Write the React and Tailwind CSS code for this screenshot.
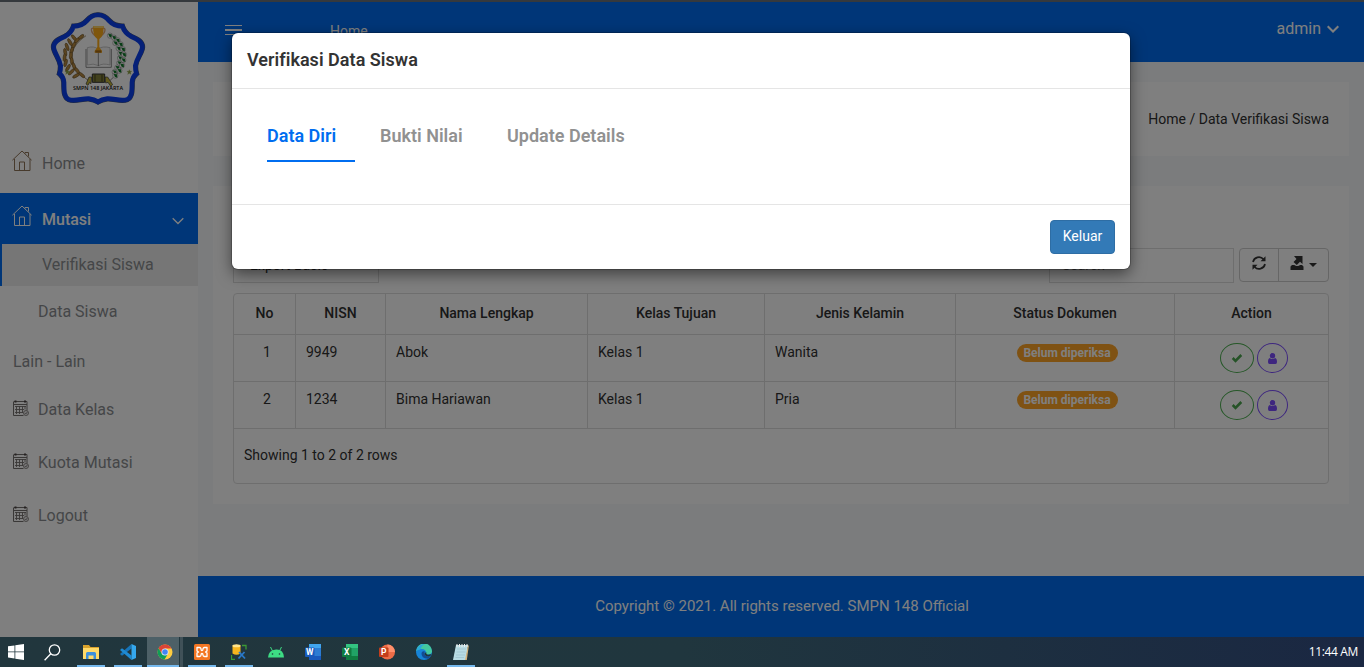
import React from "react";

const LEAVES = [
  [100, 96, 50], [88, 108, 60], [80, 122, 70], [75, 138, 80], [74, 154, 95], [78, 170, 105], [86, 185, 120], [97, 198, 135], [112, 210, 150],
];

const VINE = [
  [210, 92], [222, 98], [233, 106], [226, 114], [242, 118], [236, 130], [249, 133], [241, 145], [252, 149], [240, 159], [250, 165], [238, 174], [246, 181], [232, 188], [238, 197], [224, 201], [226, 212],
];

const SHIELD =
  "M174 30 C188 29 196 34 207 47 Q222 64 247 64 Q254 84 272 94 C296 104 307 112 307 126 C306 144 290 158 286 182 Q286 196 289 206 Q277 216 276 232 C276 258 276 276 262 283 C244 290 222 280 202 281 Q185 283 174 290 Q163 283 146 281 C126 280 104 290 86 283 C72 276 72 258 72 232 Q71 216 59 206 Q62 196 62 182 C58 158 42 144 41 126 C41 112 52 104 76 94 Q94 84 101 64 Q126 64 141 47 C152 34 160 29 174 30Z";

function SchoolLogo() {
  return (
    <svg viewBox="0 0 336 315" className="h-[105px] w-[112px]">
      <path d={SHIELD} fill="#fff" stroke="#4a5878" strokeWidth="17" />
      <path d={SHIELD} fill="#fff" stroke="#0a40f0" strokeWidth="14" />
      <path d="M138 92 Q66 140 118 206 L150 230" fill="none" stroke="#7a5c2c" strokeWidth="2" />
      {LEAVES.map(([x, y, r]) => (
        <g key={y} fill="#b98a40" stroke="#5c4824" strokeWidth="1.5">
          <ellipse cx={x + 4} cy={y} rx="12" ry="4.5" transform={`rotate(${r} ${x} ${y})`} />
          <ellipse cx={x + 24} cy={y + 4} rx="11" ry="4.5" transform={`rotate(${-r + 10} ${x + 18} ${y + 4})`} />
        </g>
      ))}
      <path d="M208 92 Q278 140 232 206 L204 232" fill="none" stroke="#555" strokeWidth="2" />
      {VINE.map(([x, y]) => (
        <g key={`${x}-${y}`}>
          <circle cx={x} cy={y} r="8" fill="#fff" stroke="#777" strokeWidth="1.4" />
          <path d={`M${x - 5} ${y - 5}l10 1 1 10-7-2z`} fill="#137a2c" />
        </g>
      ))}
      <path d="M142 128 Q162 122 174 132 Q188 122 210 128 V180 Q188 174 176 182 Q160 174 142 180Z" fill="#f4f4f4" stroke="#aaa" strokeWidth="2" />
      <path d="M138 132 V187 H214 V132 M175 132 V183" fill="none" stroke="#777" strokeWidth="2.5" />
      <path d="M162 70 C150 66 152 84 168 94 M186 70 C200 66 197 84 181 94" fill="none" stroke="#e0a878" strokeWidth="4" />
      <path d="M159 63 H191 Q191 96 178 102 V126 L186 138 V143 H164 V138 L172 126 V102 Q159 96 159 63Z" fill="#ffad18" />
      <path d="M159 63H191L189 69H161Z" fill="#ffd569" />
      <path d="M166 136h18v7h-18z" fill="#a86c18" />
      <path d="M147 216l8 0-2 20-5-3-4 8-6-4z M203 216l-8 0 2 18 7-2 8 12 6-5z" fill="#c6b73b" stroke="#333" strokeWidth="2" />
      <path d="M157 207h37v25h-37z" fill="#85823a" stroke="#333" strokeWidth="3" />
      <path d="M165 209v21M186 209v21" stroke="#45441c" strokeWidth="3" />
      <path d="M82 194l2 5h5l-4 4 2 5-5-3-5 3 2-5-4-4h5zM268 194l2 5h5l-4 4 2 5-5-3-5 3 2-5-4-4h5z" fill="#8fa344" stroke="#8fa344" />
      <text x="174" y="254" textAnchor="middle" textLength="150" lengthAdjust="spacingAndGlyphs" className="font-['Open_Sans']" fontSize="17" fontWeight="600" fill="#111">SMPN 148 JAKARTA</text>
    </svg>
  );
}

function HouseIcon({ className }) {
  return (
    <svg viewBox="0 0 20 21" className={`h-[21px] w-5 ${className}`} fill="none" stroke="currentColor" strokeWidth="1">
      <path d="M.4 10.2L10 1l9.6 9.2M2.500 9v11.500h15.500V9M7.500 20.500v-8.500h5v8.500M13 3.500V2.500h3.500V6.500" />
    </svg>
  );
}

function CalendarIcon() {
  return (
    <svg viewBox="0 0 16 16" className="h-4 w-4 text-[#75706e]" fill="none" stroke="currentColor">
      <path d="M.5 2v13.500h10M.5 1.500h13.500v9M1 4.500h13" />
      <path d="M2.500 .5v2M12 .5v2" stroke="#4c4444" strokeWidth="2" />
      <path d="M2 6.500h11M2 9.500h9M2 12.500h8M3.500 6v8M6.500 6v8M9.500 6v7M12 6v3.500" strokeWidth=".9" />
      <circle cx="13" cy="13" r="2.500" fill="#eee" strokeWidth=".8" />
      <path d="M11.800 13l1 1 1.500-2" strokeWidth=".8" />
    </svg>
  );
}

function Chevron({ className }) {
  return (
    <svg viewBox="0 0 12 8" className={className} fill="none" stroke="currentColor">
      <path d="M.7 1.200L6 6.500l5.300-5.300" />
    </svg>
  );
}

function Sidebar() {
  return (
    <aside className="w-[198px] shrink-0 bg-white text-base text-[#8a8d90]">
      <div className="h-[131px] pl-10 pt-[3px]"><SchoolLogo /></div>
      <a className="flex h-[60px] items-center gap-[9px] pl-[13px] pt-0.5">
        <HouseIcon className="-ml-px -mt-2 mr-px text-[#8f7458]" />Home
      </a>
      <a className="flex h-[51px] items-center bg-[#006df0] pl-[13px] pr-3.5 pt-0.5 font-medium text-white">
        <HouseIcon className="-ml-px -mt-2 mr-2.5" />Mutasi
        <Chevron className="ml-auto mt-0.5 h-2 w-3 stroke-[1.3]" />
      </a>
      <a className="flex h-[42px] items-center border-l-2 border-[#006df0] bg-[#ededed] pl-10">Verifikasi Siswa</a>
      <a className="flex h-[50px] items-center pl-[38px] pt-0.5">Data Siswa</a>
      <div className="flex h-[47px] items-center pl-[13px] pt-[5px]">Lain - Lain</div>
      {["Data Kelas", "Kuota Mutasi", "Logout"].map((t) => (
        <a key={t} className="flex h-[53px] items-center gap-[9px] pl-[13px]">
          <span className="-mt-[3px]"><CalendarIcon /></span>{t}
        </a>
      ))}
    </aside>
  );
}

const ROWS = [
  ["1", "9949", "Abok", "Kelas 1", "Wanita"],
  ["2", "1234", "Bima Hariawan", "Kelas 1", "Pria"],
];

const COLS = "grid grid-cols-[62px_90px_202px_177px_191px_219px_153px]";

function Table() {
  return (
    <div className="h-[191px] rounded border border-[#ddd] text-[#303030]">
      <div className={`${COLS} h-[41px] border-b border-[#ddd] text-center font-medium`}>
        {["No", "NISN", "Nama Lengkap", "Kelas Tujuan", "Jenis Kelamin", "Status Dokumen", "Action"].map((h, i) => (
          <div key={h} className={`flex items-center justify-center pb-0.5 ${i < 6 ? "border-r border-[#ddd]" : ""}`}>{h}</div>
        ))}
      </div>
      {ROWS.map((r) => (
        <div key={r[0]} className={`${COLS} h-[47px] border-b border-[#ddd] leading-5`}>
          <div className="border-r border-[#ddd] pl-[5px] pt-[7px] text-center">{r[0]}</div>
          {r.slice(1).map((c, i) => (
            <div key={i} className="border-r border-[#ddd] pl-2.5 pt-[7px]">{c}</div>
          ))}
          <div className="flex items-start justify-center border-r border-[#ddd] pl-1 pt-[9px]">
            <span className="flex h-[18px] w-[101px] items-center justify-center rounded-full bg-[#ffa426] text-xs font-bold text-white">Belum diperiksa</span>
          </div>
          <div className="flex items-start gap-[3px] pl-[45px] pt-2">
            <span className="flex h-[30px] w-[34px] items-center justify-center rounded-[50%] border border-[#4caf50] text-[#4aa64e]">
              <svg viewBox="0 0 12 10" className="h-2.5 w-3"><path d="M1.700 5l2.800 2.800L10.300 2" fill="none" stroke="currentColor" strokeWidth="2.600" /></svg>
            </span>
            <span className="flex h-[30px] w-[31px] items-center justify-center rounded-[50%] border border-[#7c4dff] text-[#7c4dff]">
              <svg viewBox="0 0 9 11" className="h-[11px] w-[9px]" fill="currentColor"><circle cx="4.500" cy="2.800" r="2.700" /><path d="M1.800 5Q4.500 7.200 7.200 5Q9 5.500 9 9Q9 11 7.500 11H1.500Q0 11 0 9Q0 5.500 1.800 5Z" /></svg>
            </span>
          </div>
        </div>
      ))}
      <div className="pl-2.5 pt-4 leading-5">Showing 1 to 2 of 2 rows</div>
    </div>
  );
}

function Page() {
  return (
    <div className="flex min-w-0 flex-1 flex-col bg-[#f6f8fa] text-sm text-[#303030]">
      <header className="flex h-[60px] shrink-0 items-start bg-[#006df0] text-white">
        <svg viewBox="0 0 17 12" className="ml-[27px] mt-[22px] h-3 w-[17px]" stroke="currentColor">
          <path d="M0 1.500h17M0 10.500h17" /><path d="M0 6h17" strokeWidth="2" />
        </svg>
        <span className="ml-[88px] mt-[19px] leading-5">Home</span>
        <span className="ml-auto mt-[15px] text-base">admin</span>
        <Chevron className="ml-1.5 mr-[25px] mt-[23px] h-2 w-3 stroke-2" />
      </header>
      <div className="mx-[15px] mt-5 flex h-[74px] shrink-0 items-center justify-end bg-white pr-5">Home / Data Verifikasi Siswa</div>
      <section className="mx-[15px] mt-[30px] h-[318px] shrink-0 bg-white px-5 pt-[62px]">
        <div className="mb-2.5 flex h-[35px] items-start">
          <div className="flex h-[35px] w-[146px] items-center border border-[#ddd] pb-px pl-4">Export Basic</div>
          <div className="ml-auto flex h-[35px] w-[185px] items-center border border-[#ddd] pb-0.5 pl-3 text-[#777]">Search</div>
          <div className="ml-[5px] flex h-[34px] w-[90px] rounded border border-[#ccc] text-[#333]">
            <span className="flex w-[39px] items-center justify-center border-r border-[#ccc] pb-1">
              <svg viewBox="0 0 14 14" className="h-3.5 w-3.5" fill="none" stroke="currentColor" strokeWidth="1.700">
                <path d="M1 6A6 6 0 0 1 11.500 3.300M13 8A6 6 0 0 1 2.500 10.700" />
                <path d="M13.500 .3v5H8.500zM.5 13.700v-5h5z" fill="currentColor" stroke="none" />
              </svg>
            </span>
            <span className="flex flex-1 items-center justify-center gap-[5px] pb-1 pr-px">
              <svg viewBox="0 0 14 14" className="h-3.5 w-3.5" fill="currentColor">
                <path d="M4 0h8.500v8L10 5.800 6.800 9 3.500 6 6.500 3z M2 9h2.200l2 1h2l2-1H12l1.500 1.500V14H.5v-3.500z" />
              </svg>
              <svg viewBox="0 0 8 4" className="mt-1 h-1 w-2" fill="currentColor"><path d="M0 0h8L4 4z" /></svg>
            </span>
          </div>
        </div>
        <Table />
      </section>
      <footer className="mt-auto flex h-[61px] shrink-0 items-center justify-center bg-[#006df0] pl-0.5 text-[15px] text-white">
        Copyright © 2021. All rights reserved. SMPN 148 Official
      </footer>
    </div>
  );
}

function Modal() {
  return (
    <div className="absolute left-[232px] top-[31px] flex h-[236px] w-[898px] flex-col rounded-md bg-white text-[#333] shadow-[0_5px_15px_rgba(0,0,0,0.5),0_0_0_1px_rgba(0,0,0,0.2)]">
      <div className="flex h-14 items-center border-b border-[#e5e5e5] pb-0.5 pl-[15px] text-lg font-semibold tracking-[0.03px]">Verifikasi Data Siswa</div>
      <div className="flex flex-1 items-start pl-[35px] pt-8 text-lg font-semibold leading-[30px] text-[#919191]">
        <div className="h-[41px] w-[88px] border-b-2 border-[#006df0] text-[#006df0]">Data Diri</div>
        <div className="ml-[25px] w-[127px]">Bukti Nilai</div>
        <div>Update Details</div>
      </div>
      <div className="flex h-[65px] justify-end border-t border-[#e5e5e5] p-[15px]">
        <button className="h-[34px] w-[65px] rounded border border-[#2e6da4] bg-[#337ab7] pb-0.5 text-sm text-white">Keluar</button>
      </div>
    </div>
  );
}

const OfficeIcon = ({ letter, dark, mid, light, round }) => (
  <svg viewBox="0 0 16 16" className="h-4 w-4">
    {round ? (
      <><circle cx="8.500" cy="8" r="7.500" fill={mid} /><path d="M8.500 .5A7.500 7.500 0 0 1 16 8H8.500z" fill={light} /></>
    ) : (
      <><rect x="4" y="0" width="12" height="16" rx="1" fill={mid} /><path d="M4 0h12v4H4z" fill={light} /><path d="M4 12h12v4H4z" fill={dark} /></>
    )}
    <rect x="0" y="3.500" width="9.500" height="9.500" rx="1" fill={dark} />
    <text x="4.750" y="11.200" textAnchor="middle" fontSize="8.500" fontWeight="700" fill="#fff">{letter}</text>
  </svg>
);

const APPS = [
  { id: "files", open: true, icon: (
    <svg viewBox="0 0 16 16" className="h-4 w-4"><path d="M0 1h6l1.500 2H16v12H0z" fill="#d9a22c" /><path d="M0 4h16v11H0z" fill="#ffd968" /><path d="M3 15V9.500Q3 8 4.500 8h7Q13 8 13 9.500V15h-2.500v-3.500h-5V15z" fill="#3d8fdb" /></svg>
  ) },
  { id: "code", open: true, icon: (
    <svg viewBox="0 0 16 16" className="h-4 w-4"><path d="M11.500 4.500L2 11.700 0 10 11.500 0z" fill="#1674b8" /><path d="M11.500 11.500L2 4.300 0 6l11.500 10z" fill="#1f8ad2" /><path d="M11.500 0L16 2v12l-4.500 2z" fill="#35a8ee" /></svg>
  ) },
  { id: "chrome", active: true, icon: (
    <svg viewBox="0 0 16 16" className="h-4 w-4"><circle cx="8" cy="8" r="7.500" fill="#ffcd40" /><path d="M1.500 4.200A7.500 7.500 0 0 1 14.500 4.500H8L4.900 9.800z" fill="#db4437" /><path d="M1.500 4.200A7.500 7.500 0 0 0 7.500 15.500L11 9.800 4.900 9.800z" fill="#0f9d58" /><circle cx="8" cy="8" r="3.500" fill="#f1f1f1" /><circle cx="8" cy="8" r="2.800" fill="#4285f4" /></svg>
  ) },
  { id: "xampp", open: true, icon: (
    <svg viewBox="0 0 16 16" className="h-4 w-4"><rect width="16" height="16" rx="1.500" fill="#f37623" /><path d="M3 3.500H5.500Q7 3.500 7 5T8 6.500 9 5 10.500 3.500H13V7l-1.500 1L13 9v3.500h-2.500Q9 12.500 9 11T8 9.500 7 11 5.500 12.500H3V9l1.500-1L3 7z" fill="none" stroke="#fff" strokeWidth="1.300" strokeLinejoin="round" /></svg>
  ) },
  { id: "database", open: true, icon: (
    <svg viewBox="0 0 16 16" className="h-4 w-4"><path d="M1.500 1.500v8Q5.500 12 9.500 9.500v-8z" fill="#f6b51e" /><ellipse cx="5.500" cy="1.800" rx="4" ry="1.500" fill="#ffe48b" /><path d="M11 1.500h4v4M.5 11v4.500H4" fill="none" stroke="#3c9a35" strokeWidth="1.300" /><path d="M8 8l6 6.500M13.500 8L7.500 14.500" stroke="#2a78c8" strokeWidth="1.800" /></svg>
  ) },
  { id: "android", icon: (
    <svg viewBox="0 0 16 16" className="h-4 w-4"><path d="M0 13.500Q.5 6 8 5.500t8 8z" fill="#3ddc84" /><path d="M2.500 3L4.500 7M13.500 3L11.500 7" stroke="#3ddc84" /><circle cx="4.500" cy="10" r=".8" fill="#20363d" /><circle cx="11.500" cy="10" r=".8" fill="#20363d" /></svg>
  ) },
  { id: "word", icon: <OfficeIcon letter="W" dark="#185abd" mid="#2b7cd3" light="#41a5ee" /> },
  { id: "excel", icon: <OfficeIcon letter="X" dark="#107c41" mid="#21a366" light="#33c481" /> },
  { id: "powerpoint", icon: <OfficeIcon letter="P" dark="#c43e1c" mid="#ed6c47" light="#ff8f6b" round /> },
  { id: "edge", icon: (
    <svg viewBox="0 0 16 16" className="h-4 w-4"><circle cx="8" cy="8" r="8" fill="#1684d8" /><path d="M.3 7A7.800 7.800 0 0 1 16 7.500Q15.500 11 11 10.500 9.500 10 10.300 8.500 9.500 4.500 5 5 1.500 5.500 .3 7Z" fill="#43c9a0" /><path d="M.3 7A7.800 7.800 0 0 1 9 .1Q5 2 5 5 1.500 5.500 .3 7Z" fill="#2ba8dc" /><path d="M5.500 9Q5 14.500 12 14.800 14 13.800 15 12 10.500 13.500 8.500 10.500 8 9 9 7.500 6 6.500 5.500 9Z" fill="#134c94" /><path d="M8.500 10.500Q8 8.500 10.200 8.200 9.800 10.500 12 10.700L15.500 10Q15 12 13 12.500 10 12.800 8.500 10.500Z" fill="#20363d" /></svg>
  ) },
  { id: "notepad", open: true, icon: (
    <svg viewBox="0 0 16 16" className="h-4 w-4"><path d="M3 1h12l-2 15H0z" fill="#b8dce4" /><path d="M15 1l.8 1-2 14H12z" fill="#d6b37a" /><path d="M4 5h9M3.500 8h9M3 11h9M2.500 13.500h8.500" stroke="#9cc2ce" strokeWidth=".7" /><path d="M4 0v3M6.500 0v3M9 0v3M11.500 0v3M14 0v3" stroke="#eee" strokeWidth="1" /></svg>
  ) },
];

function Taskbar() {
  return (
    <div className="flex h-[30px] items-stretch bg-linear-to-r from-[#21363d] via-[#20363e] to-[#1a2742]">
      <div className="flex w-8 items-center justify-center">
        <svg viewBox="0 0 16 16" className="h-4 w-4" fill="#fff"><path d="M0 2.300l6.500-.9v6.100H0zM7.300 1.300L16 0v7.500H7.300zM0 8.300h6.500v6.200L0 13.600zM7.300 8.300H16V16l-8.700-1.300z" /></svg>
      </div>
      <div className="flex w-[41px] items-center justify-center">
        <svg viewBox="0 0 17 17" className="h-[17px] w-[17px]" fill="none" stroke="#fff" strokeWidth="1.300"><circle cx="10.500" cy="6" r="5.200" /><path d="M6.800 9.700L.6 16.200" /></svg>
      </div>
      {APPS.map((a) => (
        <div key={a.id} className="flex w-[37px]">
          <div className={`flex flex-col ${a.active ? "w-8 bg-[#4d6067]" : "ml-1 w-7"}`}>
            <div className={`pt-[7px] ${a.active ? "pl-[10px]" : "pl-1.5"}`}>{a.icon}</div>
            {(a.open || a.active) && <div className="mt-auto h-0.5 bg-[#76b9ed]" />}
          </div>
          {a.active && <div className="ml-px w-[3px] bg-[#405158]" />}
        </div>
      ))}
      <div className="ml-auto flex items-center pr-1.5 text-xs text-white"><span className="font-['Open_Sans'] tracking-[-0.35px]">11:44 AM</span></div>
    </div>
  );
}

export default function App() {
  return (
    <div className="flex h-[667px] w-[1364px] flex-col overflow-hidden font-[Roboto,sans-serif]">
      <div className="h-0.5 bg-[#35393d]" />
      <main className="relative flex h-[635px] overflow-hidden">
        <Sidebar />
        <Page />
        <div className="absolute inset-0 bg-black/50" />
        <Modal />
      </main>
      <Taskbar />
    </div>
  );
}
